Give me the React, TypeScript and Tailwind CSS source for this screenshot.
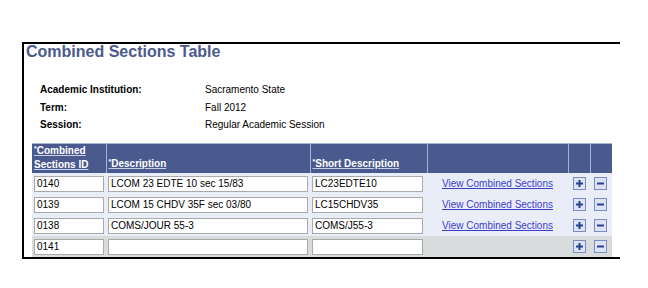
const rows = [
  { id: "0140", desc: "LCOM 23 EDTE 10 sec 15/83", short: "LC23EDTE10", link: true },
  { id: "0139", desc: "LCOM 15 CHDV 35F sec 03/80", short: "LC15CHDV35", link: true },
  { id: "0138", desc: "COMS/JOUR 55-3", short: "COMS/J55-3", link: true },
  { id: "0141", desc: "", short: "", link: false },
]

function Field({ value, w }: { value: string; w: string }) {
  return (
    <div
      className={`${w} h-[16px] bg-white border border-[#a9a9a9] pl-[2px] text-[10px] leading-[14px] text-black whitespace-nowrap overflow-hidden`}
    >
      {value}
    </div>
  )
}

function IconBtn({ kind }: { kind: "plus" | "minus" }) {
  return (
    <div className="w-[13px] h-[13px] border border-[#7d8cc0] bg-[#dbe3f5] flex items-center justify-center">
      <svg width="9" height="9" viewBox="0 0 9 9">
        <rect x="1" y="3.5" width="7" height="2" fill="#2b3f8f" />
        {kind === "plus" && <rect x="3.5" y="1" width="2" height="7" fill="#2b3f8f" />}
      </svg>
    </div>
  )
}

function HeadLink({ children }: { children: React.ReactNode }) {
  return (
    <span className="block text-[10px] font-bold leading-[13px] text-white underline decoration-[#c8d0e8]">
      <span className="text-[7px] relative -top-[3px]">*</span>
      {children}
    </span>
  )
}

export default function App() {
  return (
    <div className="w-[648px] h-[288px] bg-white font-['Liberation_Sans',Arial,sans-serif] pt-[42px] pl-[22px]">
      <div className="w-[598px] border-t-2 border-l-2 border-b-2 border-black">
        <h1 className="pl-[2px] text-[16px] leading-[15px] font-bold text-[#4b5a8c]">
          Combined Sections Table
        </h1>

        <div className="mt-[24px] ml-[16px] grid grid-cols-[165px_1fr] gap-y-[3.5px] text-[10px] leading-[14px] text-black">
          <div className="font-bold">Academic Institution:</div>
          <div>Sacramento State</div>
          <div className="font-bold">Term:</div>
          <div>Fall 2012</div>
          <div className="font-bold">Session:</div>
          <div>Regular Academic Session</div>
        </div>

        <table className="mt-[11px] ml-[8px] border-collapse">
          <thead>
            <tr className="bg-[#4a5a8e] border-t border-[#a7b3d3]">
              <th className="w-[74px] h-[29px] p-0 px-[2px] text-left align-bottom pb-[2px] border-r border-[#a7b3d3]">
                <HeadLink>
                  Combined
                  <br />
                  Sections ID
                </HeadLink>
              </th>
              <th className="w-[204px] p-0 px-[2px] text-left align-bottom pb-[2px] border-r border-[#a7b3d3]">
                <HeadLink>Description</HeadLink>
              </th>
              <th className="w-[117px] p-0 px-[2px] text-left align-bottom pb-[2px] border-r border-[#a7b3d3]">
                <HeadLink>Short Description</HeadLink>
              </th>
              <th className="w-[141px] p-0 border-r border-[#a7b3d3]" />
              <th className="w-[22px] p-0 border-r border-[#a7b3d3]" />
              <th className="w-[22px] p-0" />
            </tr>
          </thead>
          <tbody>
            {rows.map((r) => (
              <tr
                key={r.id}
                className={`${r.link ? "bg-[#e9edf7]" : "bg-[#d9dcdc]"} text-[10px] leading-[12px]`}
              >
                <td className="h-[21px] p-0 px-[2px]">
                  <Field value={r.id} w="w-[70px]" />
                </td>
                <td className="p-0 px-[2px]">
                  <Field value={r.desc} w="w-[200px]" />
                </td>
                <td className="p-0 px-[2px]">
                  <Field value={r.short} w="w-[111px]" />
                </td>
                <td className="p-0 pl-[15px]">
                  {r.link && (
                    <a className="text-[10px] leading-[12px] text-[#3d3dcc] underline whitespace-nowrap">
                      View Combined Sections
                    </a>
                  )}
                </td>
                <td className="p-0 pl-[5px]">
                  <IconBtn kind="plus" />
                </td>
                <td className="p-0 pl-[4px]">
                  <IconBtn kind="minus" />
                </td>
              </tr>
            ))}
          </tbody>
        </table>
      </div>
    </div>
  )
}
